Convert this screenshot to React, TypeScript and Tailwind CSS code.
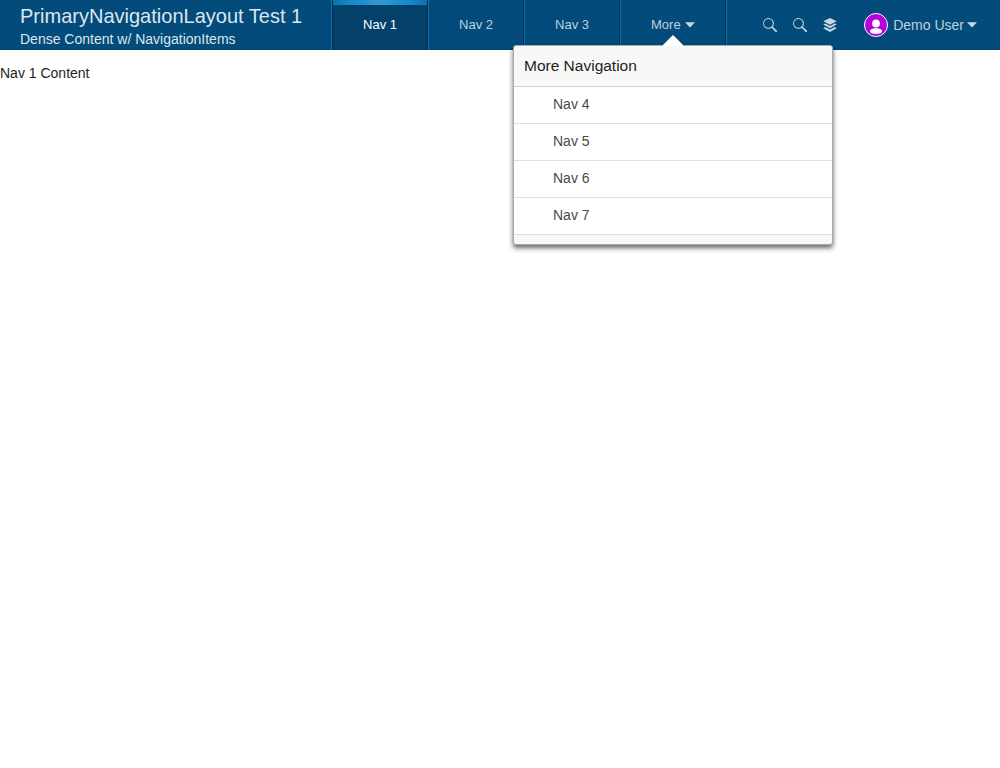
import React from 'react';

const tabs = ['Nav 1', 'Nav 2', 'Nav 3'];
const moreItems = ['Nav 4', 'Nav 5', 'Nav 6', 'Nav 7'];

function SearchIcon() {
  return (
    <svg className="block size-3.5" viewBox="0 0 48 48" fill="#c8d8e3">
      <path d="M47.2 42.600 33.600 29.800A18.400 18.400 0 1 0 29.800 33.600l12.800 13.600a3.200 3.200 0 0 0 4.600-4.600zM18.500 33.700a15.200 15.200 0 1 1 0-30.400 15.200 15.200 0 0 1 0 30.400z" />
    </svg>
  );
}

function LayersIcon() {
  return (
    <svg className="block size-3.5" viewBox="0 0 48 48" fill="#c8d8e3">
      <path d="M24 0 1 11.500 24 23l23-11.500z" />
      <path d="M7.500 18.500 1 22.500 24 35l23-12.500-6.500-4L24 27z" />
      <path d="M7.500 30.500 1 35l23 13 23-13-6.500-4.500L24 39.500z" />
    </svg>
  );
}

function Caret() {
  return (
    <svg className="block h-1.5 w-2.5" viewBox="0 0 10 6" fill="#c8d8e3">
      <path d="M0 .3h10L5 5.500z" />
    </svg>
  );
}

function Avatar() {
  return (
    <svg className="block size-6" viewBox="0 0 24 24">
      <circle cx="12" cy="12" r="11.500" fill="#b300dc" stroke="#fff" />
      <circle cx="12" cy="10.500" r="3.900" fill="#fff" />
      <path d="M6 18.200c0-2 2.500-3 6-3s6 1 6 3c0 1.800-2.500 2.700-6 2.700s-6-.9-6-2.700z" fill="#fff" />
    </svg>
  );
}

function MoreMenu() {
  return (
    <div className="absolute left-[-108px] top-[45px] z-10 h-[200px] w-[320px] rounded-[3px] border border-[#a8abad] bg-[#f8f8f8] text-[#1c1f21] shadow-[0_3px_5px_rgba(0,0,0,0.6)]">
      <svg className="absolute left-[148px] top-[-11px] h-[11px] w-[22px]" viewBox="0 0 22 11">
        <path d="M0 11 11 0l11 11z" fill="#fff" />
        <path d="M0 11 11 0l11 11" fill="none" stroke="#a8abad" strokeWidth=".8" />
      </svg>
      <h2 className="h-[41px] border-b border-[#cfd1d2] pl-2.5 text-[15.500px] leading-[40px]">More Navigation</h2>
      <ul>
        {moreItems.map((item) => (
          <li key={item} className="h-[37px] border-b border-[#dedfe0] bg-white pl-[39px] text-sm leading-[35px] text-[#434a4d]">
            {item}
          </li>
        ))}
      </ul>
    </div>
  );
}

export default function App() {
  return (
    <div className="min-h-screen bg-white font-['Liberation_Sans',Arial,sans-serif] text-[#1c1f21]">
      <header className="flex h-[50px] border-b border-[#00406c] bg-[#024b7b] text-[#bfd0dc]">
        <div className="w-[331px] shrink-0 pl-5 text-[#dce6ed]">
          <div className="h-8 text-[20.020px] leading-8">PrimaryNavigationLayout Test 1</div>
          <div className="text-sm leading-[15px]">Dense Content w/ NavigationItems</div>
        </div>
        <nav className="flex h-[50px] border-l border-[#1371a9] text-[13px]">
          {tabs.map((tab, i) => (
            <div
              key={tab}
              className={
                i === 0
                  ? 'relative w-24 border-x border-[#022f4e] bg-[#03416b] text-center leading-[50px] text-white'
                  : 'w-24 border-l border-r border-l-[#1371a9] border-r-[#022f4e] text-center leading-[50px]'
              }
            >
              {i === 0 && <div className="absolute inset-x-0 top-0 h-[5px] bg-[linear-gradient(90deg,#1071ac_0%,#1788c8_18%,#3297d3_50%,#1788c8_82%,#1071ac_100%)]" />}
              {tab}
            </div>
          ))}
          <div className="relative flex w-[106px] items-center border-l border-r border-l-[#1371a9] border-r-[#022f4e] pl-[30px]">
            <span className="mr-1">More</span>
            <Caret />
            <MoreMenu />
          </div>
        </nav>
        <div className="flex h-[50px] flex-1 items-center justify-end border-l border-[#1371a9] pr-[23px]">
          <div className="mr-[27px] flex gap-4">
            <SearchIcon />
            <SearchIcon />
            <LayersIcon />
          </div>
          <Avatar />
          <span className="ml-[5px] mr-[3px] text-sm">Demo User</span>
          <Caret />
        </div>
      </header>
      <main className="pt-[13px] text-sm leading-5">Nav 1 Content</main>
    </div>
  );
}
